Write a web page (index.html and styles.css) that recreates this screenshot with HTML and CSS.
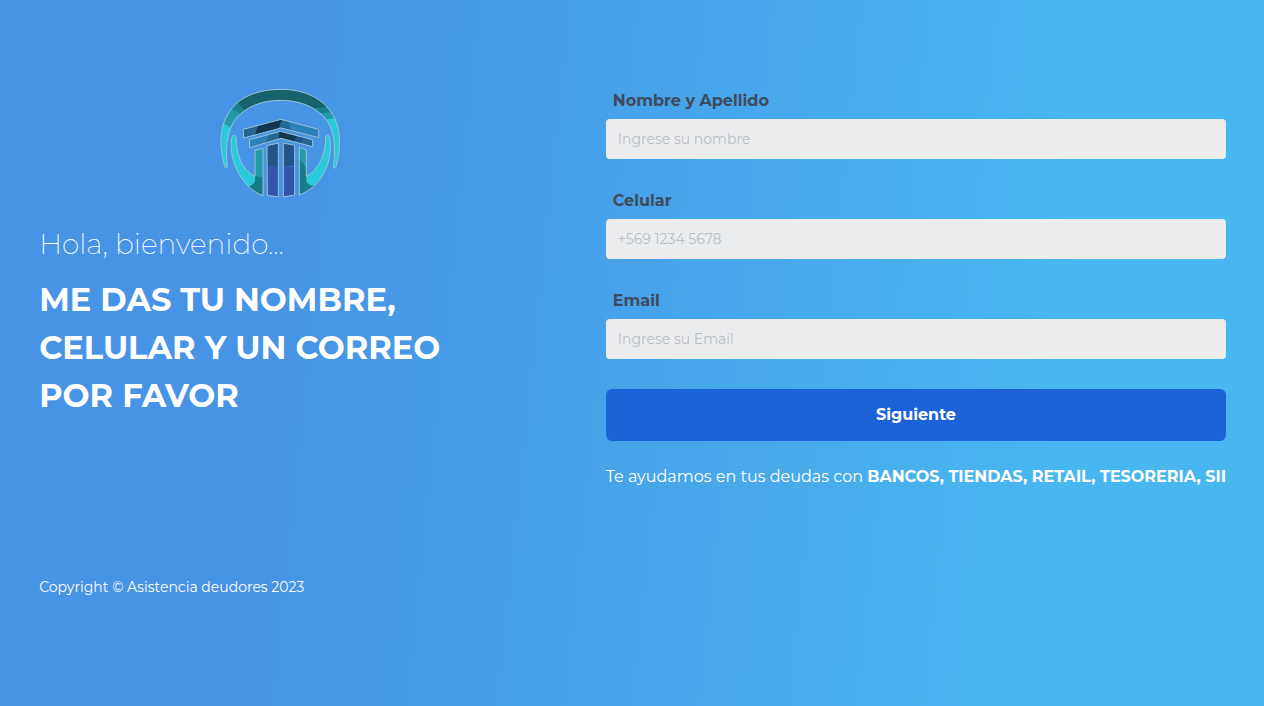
FILE: index.html
```html
<!DOCTYPE html>
<html lang="es">
<head>
<meta charset="utf-8">
<title>Asistencia deudores</title>
<link rel="stylesheet" href="styles.css">
</head>
<body>
<main class="page">
  <section class="intro">
    <svg class="logo" viewBox="0 0 390 360" role="img" aria-label="Asistencia deudores">
      <defs>
        <clipPath id="ring"><path d="M31 251C10 190 12 120 50 74C80 35 135 16 198 16C260 16 310 36 342 76C380 122 380 190 362 251Q359 254 355 250C362 202 360 150 338 112C305 68 255 49 196 49C140 49 90 68 58 110C34 148 31 200 37 250Q34 254 31 251Z"/></clipPath>
        <clipPath id="handL"><path d="M50 160Q55 149 63 158C65 215 80 258 120 277L120 199L144 193L144 335C90 317 39 240 50 160Z"/></clipPath>
        <clipPath id="handR"><path d="M332 158Q339 147 344 160C356 240 315 310 253 333L253 190L274 198L274 277C310 260 333 210 332 158Z"/></clipPath>
      </defs>
      <g clip-path="url(#ring)">
        <path fill="#28cbdc" d="M0 0H390V360H0Z"/>
        <path fill="#229aa9" d="M0 105L43 128L100 90L90 0H0Z"/>
        <path fill="#19828d" d="M48 74L68 84L80 97L120 60V0Z"/>
        <path fill="#17636b" d="M66 54L82 72L92 84L290 75L345 69L330 0H66Z"/>
        <path fill="#19828d" d="M288 75L350 68L362 84L314 92Z"/>
        <path fill="#229aa9" d="M308 91L360 82V102L325 109Z"/>
      </g>
      <g clip-path="url(#handL)">
        <path fill="#28cbdc" d="M0 140H150V350H0Z"/>
        <path fill="#229aa9" d="M120 190H150V282H120Z"/>
        <path fill="#197b87" d="M120 276L145 280V340L90 330L104 306Q124 300 120 276Z"/>
      </g>
      <g clip-path="url(#handR)">
        <path fill="#28cbdc" d="M250 140H360V350H250Z"/>
        <path fill="#229aa9" d="M250 185H274V280H250Z"/>
        <path fill="#197b87" d="M253 224L274 252V292Q280 307 300 304L270 340H250Z"/>
      </g>
      <g class="logo-outline">
        <path d="M31 251C10 190 12 120 50 74C80 35 135 16 198 16C260 16 310 36 342 76C380 122 380 190 362 251Q359 254 355 250C362 202 360 150 338 112C305 68 255 49 196 49C140 49 90 68 58 110C34 148 31 200 37 250Q34 254 31 251Z"/>
        <path d="M50 160Q55 149 63 158C65 215 80 258 120 277L120 199L144 193L144 335C90 317 39 240 50 160Z"/>
        <path d="M332 158Q339 147 344 160C356 240 315 310 253 333L253 190L274 198L274 277C310 260 333 210 332 158Z"/>
      </g>
      <path fill="#236792" d="M85 136L198 106L311 136V161L198 132L86 162Z"/>
      <path fill="#123750" d="M130 124L201 105L190 134L120 153Z"/>
      <path fill="#2c81ba" d="M220 112L311 136V161L228 139Z"/>
      <path fill="#2c81ba" d="M103 167L196 142L293 167V188L198 163L104 191Z"/>
      <path fill="#236792" d="M162 151L192 142V165L151 177Z"/>
      <path fill="#123750" d="M192 142L246 155L236 173L192 162Z"/>
      <path fill="#22528b" d="M246 155L267 160L264 181L236 173Z"/>
      <path fill="#236792" d="M267 160L293 167V188L264 180Z"/>
      <path fill="#225389" d="M156 185L190 177V248H156Z"/>
      <path fill="#3254aa" d="M156 246Q174 243 190 249V339L157 334Z"/>
      <path fill="#225389" d="M205 177L239 184V246L205 248Z"/>
      <path fill="#3254aa" d="M205 247Q225 251 239 245V333L205 339Z"/>
      <g class="logo-outline">
        <path d="M85 136L198 106L311 136V161L198 132L86 162Z"/>
        <path d="M103 167L196 142L293 167V188L198 163L104 191Z"/>
        <path d="M156 185L190 177V339L157 334Z"/>
        <path d="M205 177L239 184V333L205 339Z"/>
      </g>
    </svg>
    <p class="greeting">Hola, bienvenido...</p>
    <h1 class="title">ME DAS TU NOMBRE, CELULAR Y UN CORREO POR FAVOR</h1>
    <p class="copyright">Copyright © Asistencia deudores 2023</p>
  </section>
  <form class="form">
    <div class="field">
      <label class="label" for="nombre">Nombre y Apellido</label>
      <input class="input" id="nombre" type="text" placeholder="Ingrese su nombre">
    </div>
    <div class="field">
      <label class="label" for="celular">Celular</label>
      <input class="input" id="celular" type="tel" placeholder="+569 1234 5678">
    </div>
    <div class="field">
      <label class="label" for="email">Email</label>
      <input class="input" id="email" type="email" placeholder="Ingrese su Email">
    </div>
    <button class="submit" type="button">Siguiente</button>
    <p class="help">Te ayudamos en tus deudas con <strong class="help-strong">BANCOS, TIENDAS, RETAIL, TESORERIA, SII</strong></p>
  </form>
</main>
</body>
</html>
```
FILE: styles.css
```css
* { box-sizing: border-box; }
body {
  margin: 0;
  min-height: 100vh;
  font-family: Montserrat, Inter, "Open Sans", sans-serif;
  font-size: 16px;
  line-height: 24px;
  color: #fff;
  background: linear-gradient(96deg, #4793e5 22.5%, #48b7ef 83%);
}
.page {
  display: grid;
  grid-template-columns: 482px 620.4px;
  column-gap: 84.6px;
  height: 706px;
  padding: 84px 38px 0 39.2px;
}
.intro { display: flex; flex-direction: column; }
.logo { display: block; width: 130px; height: 120px; margin: 0 auto; flex: none; }
.logo-outline { fill: none; stroke: #9cc3cf; stroke-width: 3; stroke-linejoin: round; }
.greeting { margin: 18px 0 0; font-size: 28px; line-height: 44px; font-weight: 200; }
.title { margin: 10px 0 0; max-width: 430px; font-size: 32px; line-height: 48px; font-weight: 700; }
.copyright { margin: 155px 0 0; font-size: 14px; line-height: 24px; }
.form { padding-top: 5px; }
.field { height: 100px; }
.label { display: block; padding-left: 7px; height: 30px; font-weight: 700; color: #3f4a5e; }
.input {
  display: block;
  width: 100%;
  height: 40px;
  padding: 0 12px;
  border: 0;
  border-radius: 4px;
  background: #ebecee;
  color: #3f4a5e;
  font: 400 14px/24px Montserrat, Inter, "Open Sans", sans-serif;
}
.input::placeholder { color: #b9bdc7; opacity: 1; }
.submit {
  display: block;
  width: 100%;
  height: 52px;
  padding: 0;
  border: 0;
  border-radius: 6px;
  background: #1c62d8;
  color: #fff;
  font: 700 16px/24px Montserrat, Inter, "Open Sans", sans-serif;
}
.help { margin: 24px 0 0; white-space: nowrap; }
.help-strong { font-weight: 700; }
```
